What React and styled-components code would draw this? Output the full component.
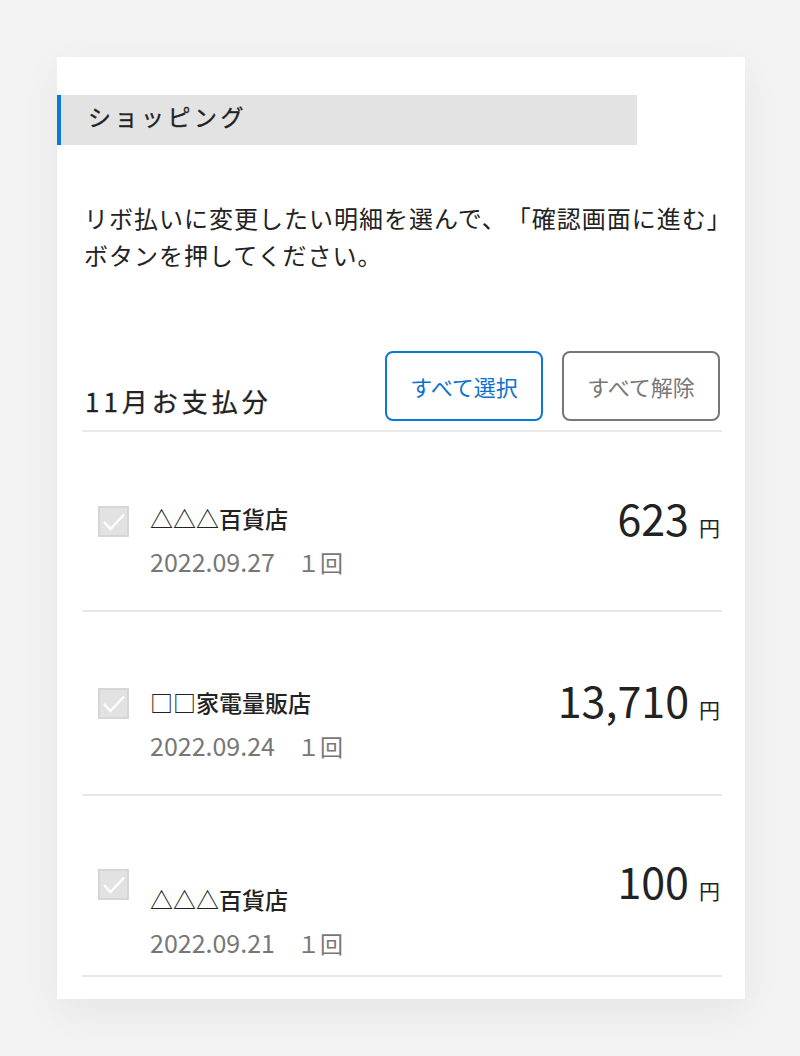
import React from 'react'
import styled, { createGlobalStyle } from 'styled-components';

const GlobalStyle = createGlobalStyle`
  body {
    margin: 0;
    background: #f3f3f3;
    font-family: "Noto Sans CJK JP", "Noto Sans", sans-serif;
    color: #222;
    text-spacing-trim: space-all;
  }
`;

const Page = styled.div`
  padding: 57px 55px 58px 57px;
`;

const Card = styled.div`
  background: #fff;
  width: 688px;
  padding: 38px 0 22px;
  box-shadow: 0 12px 40px rgba(0, 0, 0, 0.06);
`;

const Heading = styled.div`
  width: 580px;
  height: 50px;
  box-sizing: border-box;
  padding: 0 0 8px 27px;
  background: #e3e3e3;
  border-left: 4px solid #0b78d2;
  display: flex;
  align-items: center;
  font-size: 23px;
  font-weight: 400;
  letter-spacing: 3.5px;
  color: #222;
  -webkit-text-stroke: 0.3px #222;
`;

const Body = styled.div`
  padding: 0 23px 0 25px;
`;

const Lead = styled.p`
  margin: 54px 0 0 2px;
  font-size: 24px;
  line-height: 37px;
  letter-spacing: 1px;
  white-space: nowrap;
  color: #222;
`;

const MonthRow = styled.div`
  margin-top: 78px;
  display: flex;
  align-items: flex-end;
  padding-bottom: 9px;
  border-bottom: 2px solid #e8e8e8;
`;

const MonthTitle = styled.h2`
  margin: 0 0 5px 3px;
  flex: 1;
  font-size: 26px;
  line-height: 30px;
  font-weight: 400;
  letter-spacing: 4px;
  color: #222;
  -webkit-text-stroke: 0.3px #222;
`;

const Actions = styled.div`
  display: flex;
  gap: 19px;
  margin-right: 2px;
`;

const Button = styled.button`
  width: 158px;
  height: 70px;
  border-radius: 8px;
  background: #fff;
  border: 2px solid ${({ primary }) => (primary ? '#0b78d2' : '#777')};
  color: ${({ primary }) => (primary ? '#0b72cc' : '#777')};
  font-family: inherit;
  font-size: 22px;
  cursor: pointer;
`;

const Item = styled.div`
  display: grid;
  grid-template-columns: 68px 1fr auto;
  align-items: start;
  padding: ${({ pt }) => pt}px 0 ${({ pb }) => pb}px;
  border-bottom: 2px solid #e8e8e8;
`;

const Check = styled.span`
  margin: 8px 0 0 16px;
  width: 31px;
  height: 31px;
  box-sizing: border-box;
  background: #e2e2e2;
  border: 2px solid #d6d6d6;
  display: flex;
  align-items: center;
  justify-content: center;
`;

const Info = styled.div`
  display: flex;
  flex-direction: column;
  gap: 15px;
  padding-top: ${({ shift }) => shift}px;
`;

const Name = styled.div`
  font-size: 23px;
  line-height: 28px;
  font-weight: 500;
  color: #222;
`;

const Meta = styled.div`
  display: flex;
  align-items: baseline;
  font-size: 25px;
  line-height: 28px;
  color: #777;
`;

const Count = styled.span`
  margin-left: 22px;
  font-size: 23px;
`;

const Amount = styled.div`
  display: flex;
  align-items: baseline;
  gap: 10px;
  padding-right: 2px;
  margin-top: -4px;
  line-height: 46px;
  color: #222;
`;

const Value = styled.span`
  font-size: 43px;
`;

const Yen = styled.span`
  font-size: 21px;
`;

const CheckMark = () => (
  <svg width="24" height="20" viewBox="0 0 24 20">
    <path d="M2 10 L8.5 17 L22 2.5" fill="none" stroke="#fff" strokeWidth="2.4" />
  </svg>
);

const items = [
  { name: '△△△百貨店', date: '2022.09.27', amount: '623', pt: 66, pb: 34, shift: 6 },
  { name: '□□家電量販店', date: '2022.09.24', amount: '13,710', pt: 68, pb: 34, shift: 8 },
  { name: '△△△百貨店', date: '2022.09.21', amount: '100', pt: 65, pb: 18, shift: 24 },
];

const App = () => {
  return (
    <Page>
      <GlobalStyle />
      <Card>
        <Heading>ショッピング</Heading>
        <Body>
          <Lead>
            リボ払いに変更したい明細を選んで、「確認画面に進む」
            <br />
            ボタンを押してください。
          </Lead>
          <MonthRow>
            <MonthTitle>11月お支払分</MonthTitle>
            <Actions>
              <Button primary>すべて選択</Button>
              <Button>すべて解除</Button>
            </Actions>
          </MonthRow>
          {items.map((it, i) => (
            <Item key={i} pt={it.pt} pb={it.pb}>
              <Check>
                <CheckMark />
              </Check>
              <Info shift={it.shift}>
                <Name>{it.name}</Name>
                <Meta>
                  {it.date}
                  <Count>１回</Count>
                </Meta>
              </Info>
              <Amount>
                <Value>{it.amount}</Value>
                <Yen>円</Yen>
              </Amount>
            </Item>
          ))}
        </Body>
      </Card>
    </Page>
  )
}

export default App
